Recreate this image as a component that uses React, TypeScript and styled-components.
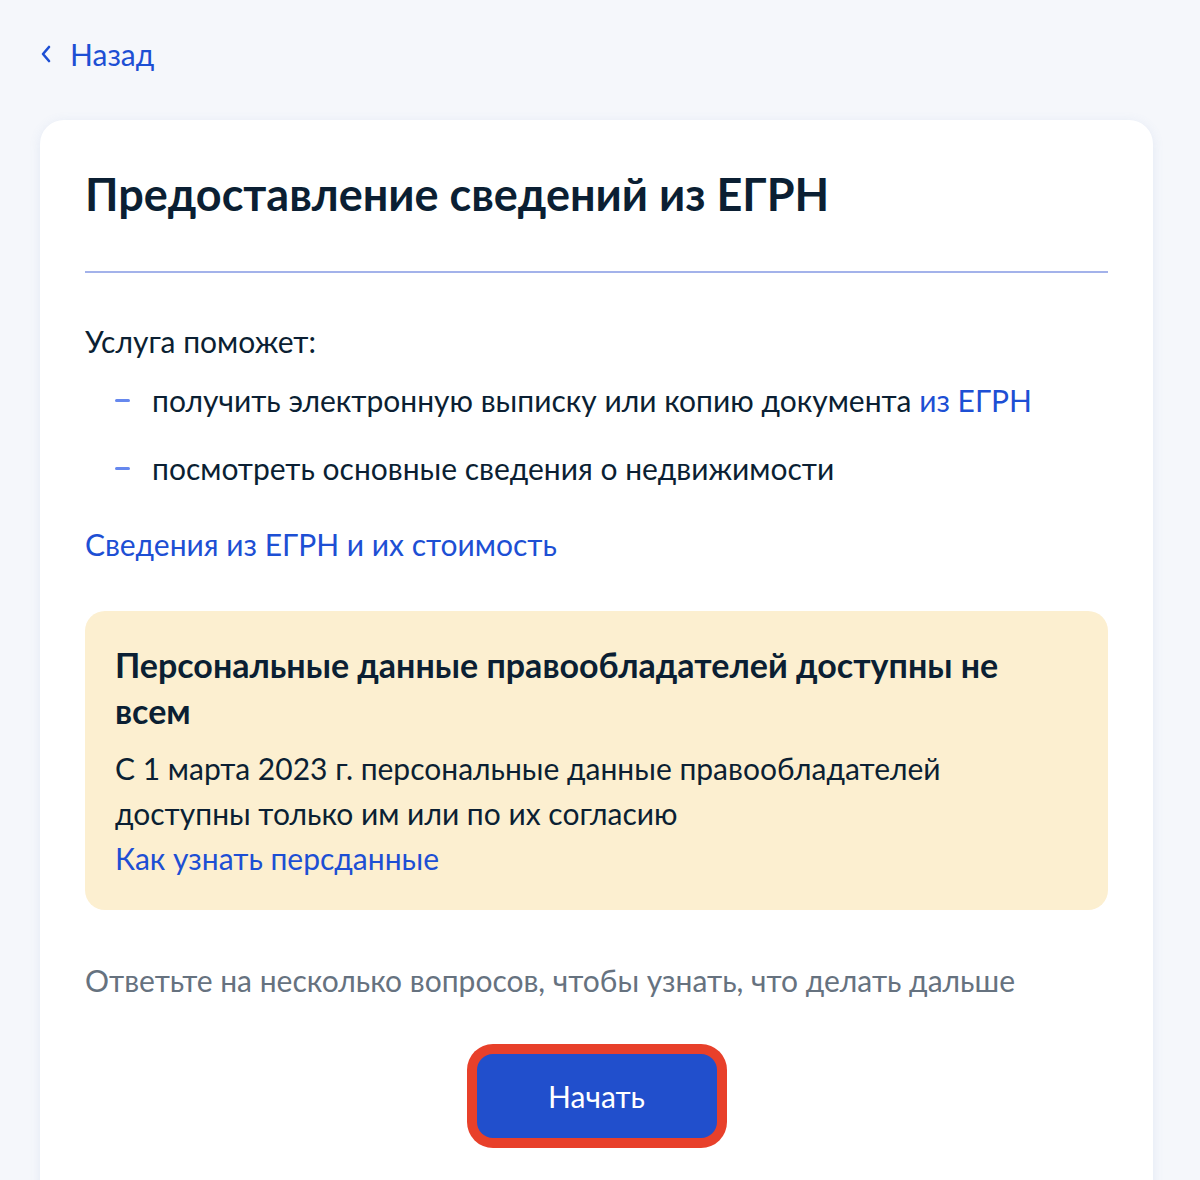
import styled, { createGlobalStyle } from 'styled-components';

const GlobalStyle = createGlobalStyle`
  html, body {
    margin: 0;
    padding: 0;
    background: #f5f7fb;
    font-family: Lato, "Noto Sans", sans-serif;
    color: #0b1f33;
  }
`;

const Page = styled.div`
  padding: 30px 47px 0 40px;
  height: 1180px;
  overflow: hidden;
  box-sizing: border-box;
`;

const BackLink = styled.a`
  display: flex;
  align-items: center;
  gap: 18px;
  height: 48px;
  font-size: 30px;
  color: #1d4fd4;
  text-decoration: none;
`;

const Card = styled.div`
  margin-top: 42px;
  background: #fff;
  border-radius: 24px;
  box-shadow: 0 2px 12px rgba(100, 130, 200, 0.12);
  padding: 46px 45px 60px;
`;

const Title = styled.h1`
  margin: 0;
  font-size: 45px;
  line-height: 56px;
  font-weight: 700;
`;

const Divider = styled.hr`
  margin: 49px 0 0;
  border: none;
  height: 2px;
  background: #a3b2ea;
`;

const Lead = styled.p`
  margin: 46px 0 0;
  font-size: 30px;
  line-height: 44px;
`;

const List = styled.ul`
  list-style: none;
  margin: 15px 0 0;
  padding: 0 0 0 30px;
  display: flex;
  flex-direction: column;
  gap: 24px;
`;

const Item = styled.li`
  display: flex;
  align-items: center;
  gap: 22px;
  font-size: 30px;
  line-height: 44px;
`;

const Dash = styled.span`
  width: 15px;
  height: 3px;
  border-radius: 2px;
  background: #6688ee;
  flex-shrink: 0;
`;

const Link = styled.a`
  color: #1d4fd4;
  text-decoration: none;
`;

const MainLink = styled(Link)`
  display: block;
  margin-top: 32px;
  font-size: 30px;
  line-height: 44px;
`;

const Notice = styled.div`
  margin-top: 45px;
  background: #fcefd0;
  border-radius: 20px;
  padding: 31px 30px 29px;
`;

const NoticeTitle = styled.h2`
  margin: 0 0 12px;
  font-size: 34px;
  line-height: 46px;
  font-weight: 700;
  max-width: 900px;
`;

const NoticeText = styled.p`
  margin: 0;
  font-size: 30px;
  line-height: 45px;
`;

const NoticeLink = styled(Link)`
  display: block;
  font-size: 30px;
  line-height: 45px;
`;

const Hint = styled.p`
  margin: 48px 0 0;
  font-size: 30px;
  line-height: 44px;
  color: #66727f;
`;

const Actions = styled.div`
  display: flex;
  justify-content: center;
  margin-top: 42px;
`;

const Highlight = styled.div`
  padding: 10px;
  border-radius: 26px;
  background: #e8402a;
`;

const Button = styled.button`
  width: 240px;
  height: 84px;
  border: none;
  border-radius: 16px;
  background: #214fcc;
  color: #fff;
  font-family: Lato, "Noto Sans", sans-serif;
  font-size: 30px;
  cursor: pointer;
`;

export default function App() {
  return (
    <Page>
      <GlobalStyle />
      <BackLink href="#">
        <svg width="12" height="18" viewBox="0 0 12 18" fill="none">
          <path d="M9 2L3 9l6 7" stroke="#1d4fd4" strokeWidth="2.6" strokeLinecap="round" strokeLinejoin="round" />
        </svg>
        Назад
      </BackLink>
      <Card>
        <Title>Предоставление сведений из ЕГРН</Title>
        <Divider />
        <Lead>Услуга поможет:</Lead>
        <List>
          <Item>
            <Dash />
            <span>
              получить электронную выписку или копию документа <Link href="#">из ЕГРН</Link>
            </span>
          </Item>
          <Item>
            <Dash />
            <span>посмотреть основные сведения о недвижимости</span>
          </Item>
        </List>
        <MainLink href="#">Сведения из ЕГРН и их стоимость</MainLink>
        <Notice>
          <NoticeTitle>Персональные данные правообладателей доступны не всем</NoticeTitle>
          <NoticeText>
            С 1 марта 2023 г. персональные данные правообладателей
            <br />
            доступны только им или по их согласию
          </NoticeText>
          <NoticeLink href="#">Как узнать персданные</NoticeLink>
        </Notice>
        <Hint>Ответьте на несколько вопросов, чтобы узнать, что делать дальше</Hint>
        <Actions>
          <Highlight>
            <Button>Начать</Button>
          </Highlight>
        </Actions>
      </Card>
    </Page>
  );
}
